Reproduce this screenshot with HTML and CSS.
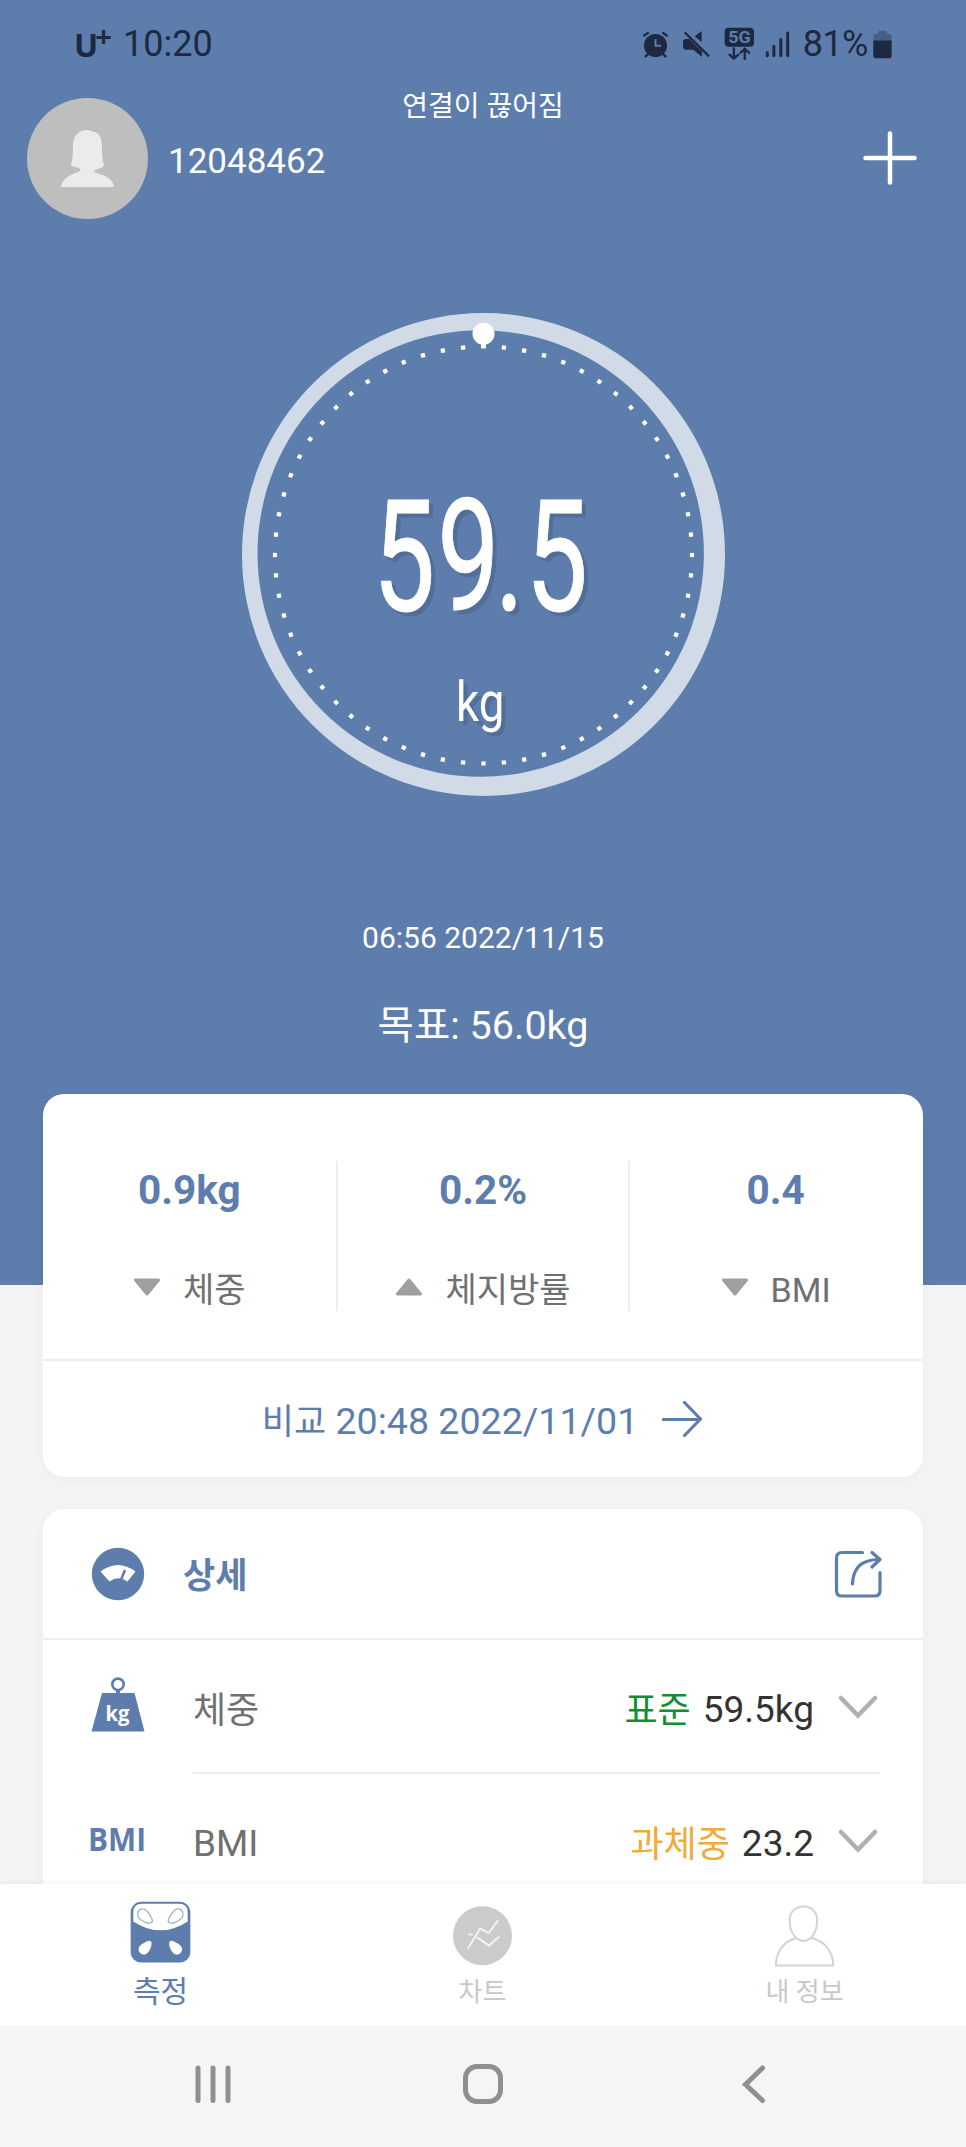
FILE: index.html
```html
<!DOCTYPE html>
<html lang="ko">
<head>
    <meta charset="UTF-8">
    <meta name="viewport" content="width=device-width, initial-scale=1.0">
    <title>측정</title>
    <link rel="stylesheet" href="styles.css">
</head>
<body>
    <main class="screen">
        <section class="hero">
            <div class="status-bar">
                <div class="status-left">
                    <span class="carrier">U<sup>+</sup></span>
                    <span class="clock">10:20</span>
                </div>
                <div class="status-right">
                    <svg class="icon-alarm" viewBox="478 92 82 82" width="27" height="27">
                        <circle cx="519" cy="136" r="35"/>
                        <path class="line" d="M484 106l12-8M554 106l-12-8M498 160l-9 9M540 160l9 9"/>
                        <path class="cut" d="M519 117v20h17"/>
                    </svg>
                    <svg class="icon-mute" viewBox="598 92 84 84" width="28" height="28">
                        <path d="M601 128q0-9 9-9h10l38 38v16l-26-22h-22q-9 0-9-9zM657 95v34l-21-18z"/>
                        <path class="line" d="M608 101l69 68"/>
                    </svg>
                    <svg class="icon-5g" viewBox="723 79 92 100" width="31" height="33">
                        <rect x="724" y="81" width="89" height="58" rx="12"/>
                        <text x="735" y="129" textLength="68" lengthAdjust="spacingAndGlyphs">5G</text>
                        <path class="line" d="M752 144v30M739 163l13 12 13-12M785 176v-30M772 157l13-12 13 12"/>
                    </svg>
                    <svg class="icon-signal" viewBox="846 92 76 82" width="25" height="27">
                        <path d="M853 158v9M873 138v29M894 118v49M915 98v69"/>
                    </svg>
                    <span class="battery-text">81%</span>
                    <svg class="icon-battery" viewBox="1172 92 58 86" width="19" height="29">
                        <path class="empty" d="M1173 124v-14q0-8 8-8h6v-4q0-5 5-5h18q5 0 5 5v4h6q8 0 8 8v14z"/>
                        <path d="M1173 123h56v46q0 8-8 8h-40q-8 0-8-8z"/>
                    </svg>
                </div>
            </div>

            <header class="header">
                <div class="user">
                    <svg class="avatar" viewBox="0 0 121 121">
                        <circle cx="60.500" cy="60.500" r="60.500" fill="#bebebe"/>
                        <path fill="#ebebeb" d="M34 89c1-8 8-12 17-15 3-1 3-3 1-4-3-1-7-1-8-3 2-7 2-14 2-20 0-9 6-15 14-15 3 0 5 1 6 2 7 0 9 7 9 15 0 6 0 12 2 18-1 3-6 4-9 5-2 1-1 2 2 3 9 3 16 6 17 14z"/>
                    </svg>
                    <span class="user-name">12048462</span>
                </div>
                <div class="connection">연결이 끊어짐</div>
                <svg class="add" viewBox="0 0 54 54" width="54" height="54">
                    <path d="M27 2.500v49M2.500 27h49"/>
                </svg>
            </header>

            <svg class="gauge" viewBox="0 0 483 483" width="483" height="483">
                <path class="ring" fill-rule="evenodd" d="M0 241.500a241.500 241.500 0 1 0 483 0a241.500 241.500 0 1 0-483 0zM15.500 240.500a223.200 223.200 0 1 0 446.400 0a223.200 223.200 0 1 0-446.400 0z"/>
                <circle class="dots" cx="241.500" cy="242" r="208.500" pathLength="640"/>
                <path class="knob" d="M239 28h5v7h-5z"/>
                <circle class="knob" cx="241.500" cy="20.700" r="11"/>
                <g class="value">
                    <text transform="translate(131 297) scale(.71 1)" x="0 90.500 172 215">59.5</text>
                </g>
                <g class="unit">
                    <text transform="translate(214 408) scale(.83 1)">kg</text>
                </g>
            </svg>

            <div class="measured-at">06:56 2022/11/15</div>
            <div class="goal">목표: 56.0kg</div>
        </section>

        <section class="card compare">
            <div class="deltas">
                <div class="delta">
                    <div class="delta-value">0.9kg</div>
                    <div class="delta-label">
                        <svg class="triangle" viewBox="0 0 28 18"><path d="M2.500 2h23L14 16z"/></svg>
                        <span>체중</span>
                    </div>
                </div>
                <div class="delta">
                    <div class="delta-value">0.2%</div>
                    <div class="delta-label">
                        <svg class="triangle" viewBox="0 0 28 18"><path d="M2.500 16h23L14 2z"/></svg>
                        <span>체지방률</span>
                    </div>
                </div>
                <div class="delta">
                    <div class="delta-value">0.4</div>
                    <div class="delta-label">
                        <svg class="triangle" viewBox="0 0 28 18"><path d="M2.500 2h23L14 16z"/></svg>
                        <span>BMI</span>
                    </div>
                </div>
            </div>
            <div class="compare-link">
                <span><span class="compare-word">비교</span> 20:48 2022/11/01</span>
                <svg viewBox="0 0 40 36" width="40" height="36">
                    <path d="M1.500 18.500H38M22.500 1.500L38.500 18 22.500 34.500"/>
                </svg>
            </div>
        </section>

        <section class="card details">
            <div class="details-head">
                <svg viewBox="0 0 54 54" width="54" height="54">
                    <circle cx="27" cy="27" r="26.200" fill="#5d7dac"/>
                    <path fill="#fff" d="M9.500 24.500Q27 11.500 44.500 24.500L36.500 34.500Q27 28 18.500 34.500z"/>
                    <path stroke="#5d7dac" stroke-width="2.500" d="M34 23l-4.500 11"/>
                </svg>
                <h2>상세</h2>
                <svg class="share" viewBox="0 0 48 48" width="48" height="48">
                    <path d="M28.500 2.500H8q-5.500 0-5.500 5.500v32.500q0 5.500 5.500 5.500h32.500q5.500 0 5.500-5.500V22.500"/>
                    <path d="M18.500 34C19 19 26 9.500 45 9.500M38 2.500l8 7-8 7.500"/>
                </svg>
            </div>
            <div class="row">
                <svg class="row-icon" viewBox="0 0 54 56" width="54" height="56">
                    <circle cx="27" cy="8.300" r="5.700" fill="none" stroke="#5d7dac" stroke-width="2.600"/>
                    <path fill="#5d7dac" d="M25 14h4v3h14.500L53.500 55.500H.5L11 17h14z"/>
                    <text class="kg-text" x="14.500" y="44.500" textLength="24" lengthAdjust="spacingAndGlyphs">kg</text>
                </svg>
                <div class="row-body">
                    <span class="row-name">체중</span>
                    <span class="level normal">표준</span>
                    <span class="row-value">59.5kg</span>
                    <svg class="chevron" viewBox="0 0 40 24"><path d="M3 3l17 17.500L37 3"/></svg>
                </div>
            </div>
            <div class="row">
                <svg class="row-icon bmi-icon" viewBox="-5 0 66 56" width="66" height="56">
                    <text class="bmi-text" x="-2" y="41" textLength="58" lengthAdjust="spacingAndGlyphs">BMI</text>
                </svg>
                <div class="row-body">
                    <span class="row-name latin">BMI</span>
                    <span class="level over">과체중</span>
                    <span class="row-value">23.2</span>
                    <svg class="chevron" viewBox="0 0 40 24"><path d="M3 3l17 17.500L37 3"/></svg>
                </div>
            </div>
        </section>
    </main>

    <nav class="tabs">
        <div class="tab active">
            <svg viewBox="121 91 184 186" width="61" height="62">
                <rect x="123" y="93" width="180" height="183" rx="32" fill="#5d7dac"/>
                <path fill="#fff" d="M131 125q0-26 26-26h112q26 0 26 26v27q-82 54-164 0z"/>
                <path class="foot" d="M144 131c0-14 10-19 20-16 10 4 17 17 23 29 6 11-7 17-17 12-15-6-26-13-26-25zM281 131c0-14-10-19-20-16-10 4-17 17-23 29-6 11 7 17 17 12 15-6 26-13 26-25z"/>
                <path fill="#fff" d="M147 236c0-12 14-17 24-23 9-5 16-2 15 8-1 12-8 22-13 27-9 9-26 2-26-12zM278 236c0-12-14-17-24-23-9-5-16-2-15 8 1 12 8 22 13 27 9 9 26 2 26-12z"/>
            </svg>
            <span>측정</span>
        </div>
        <div class="tab">
            <svg viewBox="1087 105 184 186" width="61" height="62">
                <circle cx="1179" cy="197" r="89" fill="#cbcbcb"/>
                <path class="chart-line" d="M1136 234l36-59 26 14 27-37M1139 193l8 1M1164 203l35 24 29-26"/>
            </svg>
            <span>차트</span>
        </div>
        <div class="tab">
            <svg viewBox="825 103 184 186" width="61" height="62">
                <path class="person" d="M914 107c25 0 41 17 41 42 0 33-17 62-41 62s-42-29-42-62c0-25 17-42 42-42zM891 203c-37 9-61 43-60 82h173c0-41-26-74-66-83"/>
            </svg>
            <span>내 정보</span>
        </div>
    </nav>

    <div class="nav-bar">
        <svg viewBox="0 0 40 40" width="40" height="40"><path d="M5 4v32.500M20 4v32.500M35 4v32.500"/></svg>
        <svg viewBox="0 0 40 40" width="40" height="40"><rect x="2.500" y="2.500" width="35" height="35" rx="11.500"/></svg>
        <svg viewBox="0 0 40 40" width="40" height="40"><path d="M29.500 4L12.500 20.500 29.500 36.500"/></svg>
    </div>
</body>
</html>
```

FILE: styles.css
```css
:root {
    --blue: #5d7dac;
    --dark: #1c2940;
    --grey-bg: #f4f4f4;
    --line: #eeeeee;
    --text-grey: #707070;
}

* {
    margin: 0;
    padding: 0;
    box-sizing: border-box;
}

body {
    width: 966px;
    height: 2147px;
    display: flex;
    flex-direction: column;
    overflow: hidden;
    background: var(--grey-bg);
    font-family: Roboto, "Noto Sans CJK KR", sans-serif;
}

svg {
    display: block;
    flex: none;
}

.screen {
    height: 1884px;
    overflow: hidden;
}

/* Blue top area */
.hero {
    height: 1285px;
    background: var(--blue);
    color: #fff;
    display: flex;
    flex-direction: column;
    align-items: center;
}

.status-bar {
    width: 100%;
    height: 80px;
    padding: 8px 74px 0 74px;
    display: flex;
    justify-content: space-between;
    align-items: center;
    color: var(--dark);
    font-size: 36px;
    line-height: 72px;
}

.status-left,
.status-right {
    display: flex;
    align-items: center;
}

.carrier {
    width: 49px;
    font-family: "Open Sans", sans-serif;
    font-size: 32px;
    font-weight: 700;
    padding-top: 2px;
    white-space: nowrap;
}

.carrier sup {
    font-size: 29px;
    line-height: 0;
    vertical-align: 10px;
    margin-left: -3px;
}

.status-right svg {
    fill: var(--dark);
}

.status-right .line {
    fill: none;
    stroke: var(--dark);
    stroke-width: 7;
    stroke-linecap: round;
}

.icon-alarm .cut {
    fill: none;
    stroke: var(--blue);
    stroke-width: 6;
}

.icon-mute {
    margin-left: 13px;
}

.icon-5g {
    margin-left: 14px;
    margin-top: -2px;
}

.icon-5g text {
    fill: var(--blue);
    font-size: 50px;
    font-weight: 700;
}

.icon-signal {
    margin-left: 10px;
}

.icon-signal path {
    stroke: var(--dark);
    stroke-width: 9;
    stroke-linecap: round;
}

.battery-text {
    margin-left: 13px;
    letter-spacing: -.5px;
}

.icon-battery {
    margin-left: 5px;
}

.icon-battery .empty {
    opacity: .35;
}

.header {
    width: 100%;
    height: 139px;
    padding: 0 49px 0 27px;
    display: grid;
    grid-template-columns: 1fr auto 1fr;
    align-items: end;
}

.user {
    display: flex;
    align-items: center;
    gap: 20px;
}

.avatar {
    width: 121px;
    height: 121px;
}

.user-name {
    padding-top: 5px;
    font-size: 35px;
}

.connection {
    align-self: start;
    width: 200px;
    margin-left: 22px;
    text-align: center;
    font-size: 28px;
    line-height: 54px;
}

.add {
    justify-self: end;
    margin-bottom: 34px;
}

.add path {
    stroke: #fff;
    stroke-width: 4.5;
    stroke-linecap: round;
}

.gauge {
    margin-top: 94px;
}

.ring {
    fill: #d1dbe8;
}

.dots {
    fill: none;
    stroke: #fff;
    stroke-width: 4.2;
    stroke-dasharray: 2.1 7.9;
    stroke-dashoffset: 1.05;
}

.knob {
    fill: #fff;
}

.value,
.unit {
    fill: #fff;
}

.value {
    font-size: 156px;
    stroke: #fff;
    stroke-width: 1;
    filter: drop-shadow(4.5px 4.5px 0 #516e99);
}

.unit {
    font-size: 55px;
    filter: drop-shadow(4.5px 4.5px 0 #516e99);
}

.measured-at {
    margin-top: 122px;
    font-size: 30px;
    line-height: 40px;
}

.goal {
    margin-top: 43px;
    font-size: 39.5px;
    line-height: 50px;
}

/* Cards */
.card {
    width: 880px;
    margin: 0 auto;
    background: #fff;
    border-radius: 21px;
    box-shadow: 0 2px 14px rgba(0, 0, 0, 0.04);
}

.compare {
    position: relative;
    height: 383px;
    margin-top: -191px;
}

.deltas {
    height: 267px;
    padding: 67px 2px 0 0;
    border-bottom: 2px solid var(--line);
    display: grid;
    grid-template-columns: repeat(3, 1fr);
}

.delta {
    height: 150px;
    text-align: center;
}

.delta + .delta {
    border-left: 2px solid var(--line);
}

.delta-value {
    padding-top: 4px;
    color: var(--blue);
    font-size: 40.5px;
    font-weight: 700;
    line-height: 50px;
}

.delta-label {
    margin-top: 50px;
    display: flex;
    justify-content: center;
    align-items: center;
    gap: 22px;
    color: var(--text-grey);
    font-size: 34px;
    line-height: 50px;
}

.triangle {
    width: 28px;
    height: 18px;
    margin-top: -6px;
    fill: #9f9f9f;
    stroke: #9f9f9f;
    stroke-width: 3;
    stroke-linejoin: round;
}

.compare-link {
    height: 116px;
    padding: 0 2px 1px 0;
    display: flex;
    justify-content: center;
    align-items: center;
    gap: 24px;
    color: var(--blue);
    font-size: 37.6px;
}

.compare-word {
    font-size: 35px;
}

.compare-link path,
.share path {
    fill: none;
    stroke: var(--blue);
    stroke-width: 3.2;
    stroke-linecap: round;
    stroke-linejoin: round;
}

.details {
    height: 500px;
    margin-top: 32px;
}

.details-head {
    height: 131px;
    padding: 0 41px 0 48px;
    border-bottom: 2px solid var(--line);
    display: flex;
    align-items: center;
}

.details-head h2 {
    margin-left: 38px;
    padding-bottom: 2px;
    color: var(--blue);
    font-size: 35px;
    font-weight: 700;
}

.share {
    margin-left: auto;
}

.row {
    height: 134px;
    padding: 0 43px 0 48px;
    display: flex;
    align-items: center;
}

.row-icon {
    margin-top: -6px;
}

.bmi-icon {
    margin-left: -6px;
}

.kg-text,
.bmi-text {
    font-family: "Open Sans", sans-serif;
    font-weight: 700;
}

.kg-text {
    fill: #fff;
    font-size: 21px;
}

.bmi-text {
    fill: var(--blue);
    font-size: 33px;
}

.row-body {
    width: 687px;
    height: 134px;
    margin-left: auto;
    padding-top: 4px;
    border-bottom: 2px solid var(--line);
    display: flex;
    align-items: center;
    font-size: 36px;
}

.row-name {
    flex: 1;
    padding-bottom: 2px;
    color: var(--text-grey);
}

.row-name.latin {
    padding: 2px 0 0;
    font-size: 37px;
}

.level {
    padding-bottom: 2px;
}

.normal {
    color: #109030;
}

.over {
    color: #efab38;
}

.row-value {
    margin-left: 12px;
    padding-top: 2px;
    color: #333;
    font-size: 37px;
}

.chevron {
    width: 40px;
    height: 24px;
    margin: -3px 2px 0 24px;
    fill: none;
    stroke: #b0b0b0;
    stroke-width: 4.5;
    stroke-linecap: round;
}

/* Bottom tabs */
.tabs {
    position: relative;
    height: 142px;
    background: #fff;
    box-shadow: 0 -2px 5px rgba(0, 0, 0, 0.04);
    display: grid;
    grid-template-columns: repeat(3, 1fr);
}

.tab {
    padding: 21px 1px 0 0;
    display: flex;
    flex-direction: column;
    align-items: center;
    color: #c8c8c8;
    font-size: 26px;
    line-height: 50px;
}

.tab.active {
    padding-top: 17px;
    color: var(--blue);
    font-size: 30px;
    line-height: 57px;
}

.foot {
    fill: none;
    stroke: #9fb2ce;
    stroke-width: 4;
}

.chart-line {
    fill: none;
    stroke: #f4f4f4;
    stroke-width: 6;
    stroke-linecap: round;
    stroke-linejoin: round;
}

.person {
    fill: none;
    stroke: #d3d3d3;
    stroke-width: 6;
}

/* System navigation */
.nav-bar {
    height: 121px;
    padding: 38px 193px 0;
    background: #f5f5f5;
    display: flex;
    justify-content: space-between;
}

.nav-bar svg {
    fill: none;
    stroke: #8f8f8f;
    stroke-width: 5;
    stroke-linecap: round;
}
```
